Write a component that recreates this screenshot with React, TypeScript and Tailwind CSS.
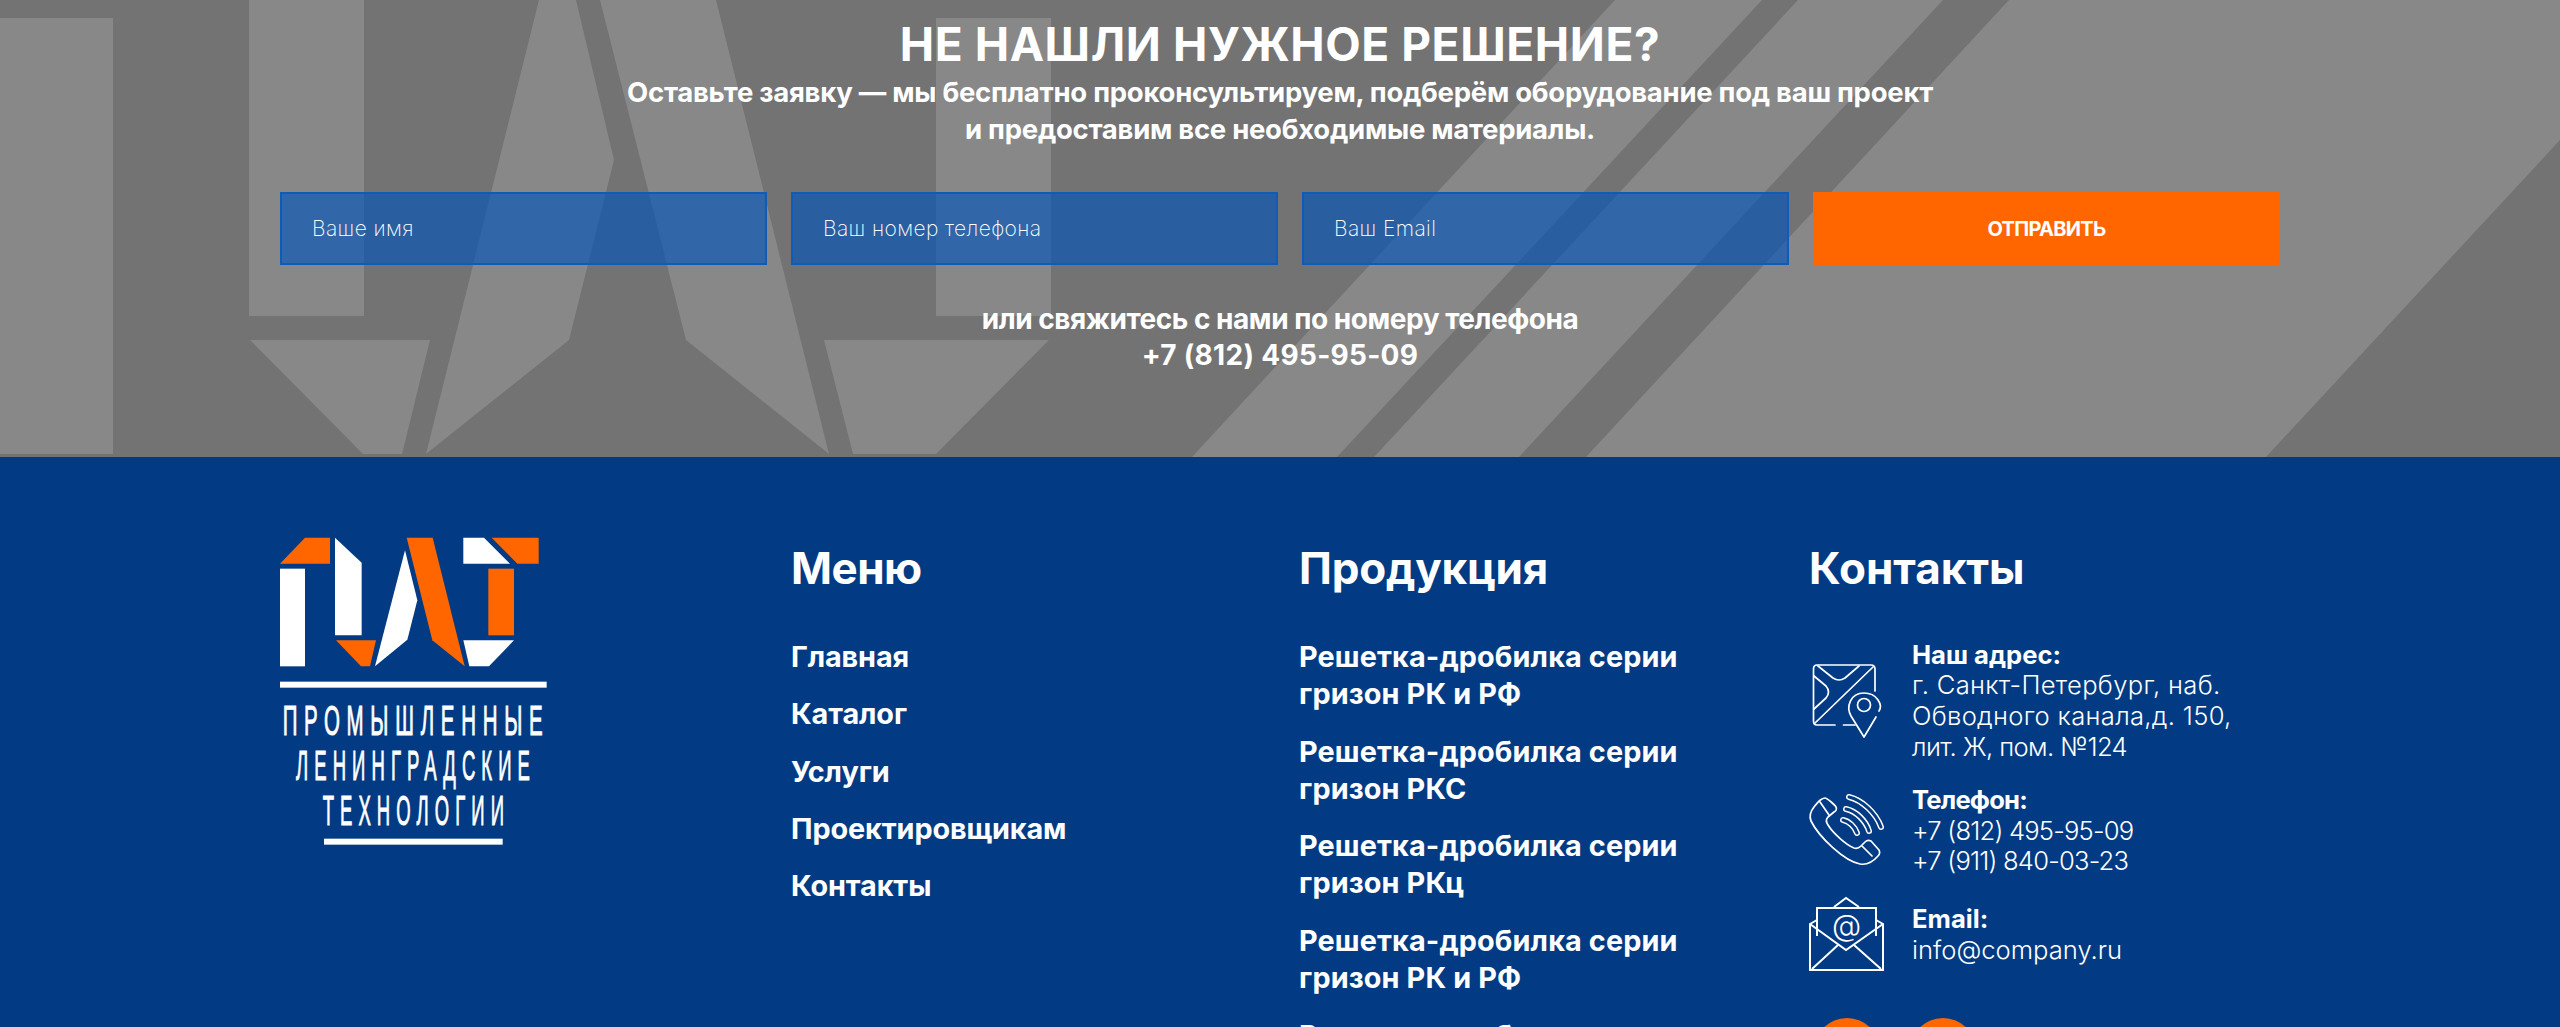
const font = { fontFamily: "Inter, 'Noto Sans', sans-serif" };

function Background() {
  return (
    <svg className="absolute inset-0 h-full w-full" viewBox="0 0 2560 457" preserveAspectRatio="none">
      <rect width="2560" height="457" fill="#737373" />
      <g fill="#888888">
        <rect x="0" y="18" width="113" height="436" />
        <rect x="249" y="0" width="115" height="316" />
        <polygon points="250,340 430,340 402,454 363,454" />
        <polygon points="539,0 576,0 614,160 569,340 426,454" />
        <polygon points="600,0 716,0 829,454 686,340" />
        <rect x="936" y="18" width="115" height="298" />
        <polygon points="824,340 1049,340 936,454 853,454" />
        <polygon points="1615,0 1762,0 1337,457 1192,457" />
        <polygon points="1798,0 1943,0 1519,457 1374,457" />
        <polygon points="2009,0 2560,0 2560,140 2266,457 1586,457" />
      </g>
    </svg>
  );
}

function Field({ placeholder }: { placeholder: string }) {
  return (
    <div className="flex h-[73px] w-[487px] items-center border-2 border-[#0e5cb8] bg-[rgba(0,83,186,0.64)] pl-[30px] text-[21px] font-extralight tracking-[0.4px] text-white">
      {placeholder}
    </div>
  );
}

function Logo() {
  const t = { fontFamily: "'Liberation Sans', sans-serif", fill: "#fff", stroke: "#fff", strokeWidth: 3 };
  return (
    <svg width="268" height="308" viewBox="60 50 804 924" className="shrink-0">
      <polygon fill="#ff6600" points="60,130 135,52 210,52 210,130" />
      <rect fill="#fff" x="60" y="145" width="75" height="293" />
      <polygon fill="#fff" points="225,52 305,127 305,345 225,345" />
      <polygon fill="#ff6600" points="228,360 348,360 330,438 303,438" />
      <polygon fill="#fff" points="435,90 472,240 442,358 345,438" />
      <polygon fill="#ff6600" points="440,52 518,52 614,438 517,360" />
      <polygon fill="#fff" points="610,52 672,52 750,130 610,130" />
      <polygon fill="#ff6600" points="695,52 836,52 836,130 772,130" />
      <rect fill="#ff6600" x="685" y="145" width="77" height="200" />
      <polygon fill="#fff" points="610,360 762,360 687,438 628,438" />
      <rect fill="#fff" x="60" y="484" width="800" height="18" />
      <text {...t} x="68" y="645" fontSize="128" letterSpacing="42" textLength="800" lengthAdjust="spacingAndGlyphs">ПРОМЫШЛЕННЫЕ</text>
      <text {...t} x="108" y="780" fontSize="128" letterSpacing="42" textLength="720" lengthAdjust="spacingAndGlyphs">ЛЕНИНГРАДСКИЕ</text>
      <text {...t} x="188" y="914" fontSize="128" letterSpacing="42" textLength="562" lengthAdjust="spacingAndGlyphs">ТЕХНОЛОГИИ</text>
      <rect fill="#fff" x="192" y="955" width="536" height="18" />
    </svg>
  );
}

function AddressIcon() {
  return (
    <svg width="100" height="100" viewBox="0 0 100 100" fill="none" stroke="#fff" strokeWidth="1.7" strokeLinecap="round" strokeLinejoin="round" className="shrink-0">
      <path d="M35 74H17Q13.500 74 13.500 70V18Q13.500 14 17 14H71Q75 14 75 18V40" />
      <path d="M43.500 74H55" />
      <path d="M73 16L15 72" />
      <path d="M18 15L33 27Q39 31 45 27L59 15" />
      <path d="M14 25L26 35Q31 41 26 47L14 58" />
      <circle cx="64" cy="54" r="6.500" />
      <path d="M76 66L64 86L51 65C46 56 50 42 64 42C77 42 83 54 79 60" />
    </svg>
  );
}

function PhoneIcon() {
  return (
    <svg width="100" height="100" viewBox="0 0 100 100" fill="none" stroke="#fff" strokeLinecap="round" strokeLinejoin="round" className="shrink-0">
      <g strokeWidth="1.7">
        <path d="M14 22C18 17 21 13 25 13C27 13 35 20 36 22C37 24 36 26 34 27L28 32C26 34 26 37 28 40C33 48 46 60 54 63C57 64 59 63 61 61L65 57C67 55 69 55 71 56L79 65C80 67 80 69 78 71C72 78 66 80 60 79C44 76 19 52 11 36C9 31 10 27 14 22Z" />
        <path d="M20 17L29 30" />
        <path d="M62 61L72 71" />
      </g>
      <g strokeWidth="6">
        <path d="M49 12C62 15 76 28 81 42" />
        <path d="M46 24C56 26 66 36 69 46" />
        <path d="M43 35C49 36 55 42 57 48" />
      </g>
      <g strokeWidth="3" stroke="#023b83">
        <path d="M49 12C62 15 76 28 81 42" />
        <path d="M46 24C56 26 66 36 69 46" />
        <path d="M43 35C49 36 55 42 57 48" />
      </g>
    </svg>
  );
}

function MailIcon() {
  return (
    <svg width="100" height="100" viewBox="0 0 100 100" fill="none" stroke="#fff" strokeWidth="2" strokeLinejoin="miter" className="shrink-0">
      <path d="M17 30L10 34V80H83V34L76 30" />
      <path d="M10 34L46 60L83 34" />
      <path d="M12 79L38 55M81 79L54 55" />
      <path d="M17 46V18H76V46" />
      <path d="M34 17L46 8L59 17" />
      <text x="46.500" y="46" textAnchor="middle" fontSize="30" fill="#fff" stroke="none" fontWeight="300" style={font}>@</text>
    </svg>
  );
}

type Line = { text: string; cls: string };

function Contact({ icon, title, titleCls, lines, iconCls, rowCls }: { icon: React.ReactNode; title: string; titleCls: string; lines: Line[]; iconCls: string; rowCls: string }) {
  return (
    <div className={`flex items-center ${rowCls}`}>
      <div className={`ml-[-8px] flex h-0 w-[112px] shrink-0 items-center ${iconCls}`}>{icon}</div>
      <div className="text-[25.6px] leading-[30.6px] text-white">
        <div className={`font-bold ${titleCls}`}>{title}</div>
        {lines.map((l) => (
          <div key={l.text} className={`font-light ${l.cls}`}>{l.text}</div>
        ))}
      </div>
    </div>
  );
}

const menu = ["Главная", "Каталог", "Услуги", "Проектировщикам", "Контакты"];
const products = ["РК и РФ", "РКС", "РКц", "РК и РФ", "РКС"];

export default function App() {
  return (
    <div className="h-[1027px] overflow-hidden bg-[#023b83] text-white" style={font}>
      <section className="relative h-[457px]">
        <Background />
        <div className="relative flex flex-col items-center pt-[16px]">
          <h2 className="text-[46px] leading-[56px] font-bold tracking-[0.6px]">НЕ НАШЛИ НУЖНОЕ РЕШЕНИЕ?</h2>
          <p className="mt-[2px] text-center text-[27.500px] leading-[37px] font-bold tracking-[-0.27px]">
            Оставьте заявку — мы бесплатно проконсультируем, подберём оборудование под ваш проект
            <br />и предоставим все необходимые материалы.
          </p>
          <div className="mt-[44px] flex gap-[24px]">
            <Field placeholder="Ваше имя" />
            <Field placeholder="Ваш номер телефона" />
            <Field placeholder="Ваш Email" />
            <button className="h-[73px] w-[467px] bg-[#ff6600] text-[20px] font-bold tracking-[-0.7px] text-white">ОТПРАВИТЬ</button>
          </div>
          <p className="mt-[36px] text-center text-[28px] leading-[36px] font-bold tracking-[0.3px]">
            <span className="tracking-[-0.47px]">или свяжитесь с нами по номеру телефона</span>
            <br />+7 (812) 495-95-09
          </p>
        </div>
      </section>
      <footer className="flex pt-[80px] pl-[280px]">
        <div className="w-[511px]"><Logo /></div>
        <div className="w-[508px]">
          <h3 className="mt-[3px] text-[44px] leading-[56px] font-bold tracking-[-0.5px]">Меню</h3>
          <ul className="mt-[42px] flex flex-col gap-[20.300px]">
            {menu.map((m) => (
              <li key={m} className="text-[28.800px] leading-[37px] font-bold tracking-[-0.1px]">{m}</li>
            ))}
          </ul>
        </div>
        <div className="w-[510px]">
          <h3 className="mt-[3px] text-[44px] leading-[56px] font-bold tracking-[-0.2px]">Продукция</h3>
          <ul className="mt-[42px] flex flex-col gap-[20.700px]">
            {products.map((p, i) => (
              <li key={i} className="text-[28.800px] leading-[37px] font-bold tracking-[0.13px]">
                Решетка-дробилка серии
                <br />гризон {p}
              </li>
            ))}
          </ul>
        </div>
        <div>
          <h3 className="mt-[3px] text-[44px] leading-[56px] font-bold tracking-[0px]">Контакты</h3>
          <div className="mt-[44px] ml-[-1px] flex flex-col">
            <Contact
              icon={<AddressIcon />}
              iconCls="mt-0"
              rowCls="h-[122px]"
              title="Наш адрес:"
              titleCls="tracking-[0px]"
              lines={[
                { text: "г. Санкт-Петербург, наб.", cls: "tracking-[0.3px]" },
                { text: "Обводного канала,д. 150,", cls: "tracking-[0.3px]" },
                { text: "лит. Ж, пом. №124", cls: "tracking-[-0.6px]" },
              ]}
            />
            <div className="mt-[23px]">
              <Contact
                icon={<PhoneIcon />}
                iconCls="mt-[8px]"
                rowCls="h-[92px]"
                title="Телефон:"
                titleCls="tracking-[-0.8px]"
                lines={[
                  { text: "+7 (812) 495-95-09", cls: "tracking-[-0.8px]" },
                  { text: "+7 (911) 840-03-23", cls: "tracking-[-0.8px]" },
                ]}
              />
            </div>
            <div className="mt-[27px]">
              <Contact
                icon={<MailIcon />}
                iconCls="mt-[10px]"
                rowCls="h-[61px]"
                title="Email:"
                titleCls="tracking-[0px]"
                lines={[{ text: "info@company.ru", cls: "tracking-[0px]" }]}
              />
            </div>
            <div className="mt-[53px] ml-[6px] flex gap-[30px]">
              <div className="h-[66px] w-[66px] rounded-full bg-[#ff6600]" />
              <div className="h-[66px] w-[66px] rounded-full bg-[#ff6600]" />
            </div>
          </div>
        </div>
      </footer>
    </div>
  );
}
